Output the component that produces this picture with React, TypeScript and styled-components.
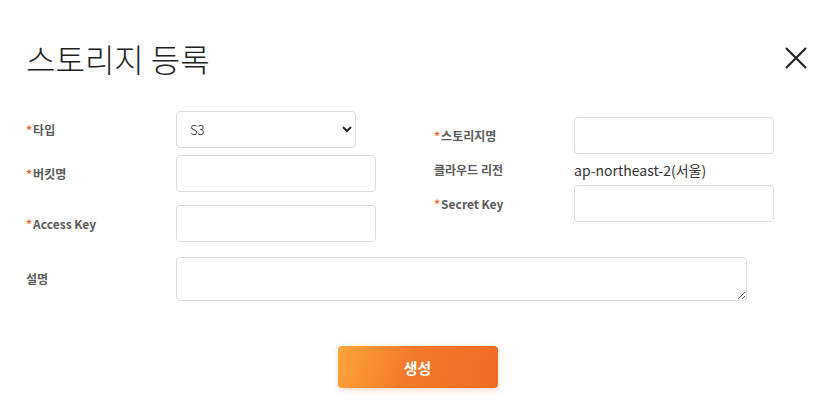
import React from "react";
import styled, { createGlobalStyle } from "styled-components";

const GlobalStyle = createGlobalStyle`
  html, body { margin: 0; padding: 0; background: #fff; }
  body { font-family: "Noto Sans CJK KR", "Noto Sans", sans-serif; color: #222; }
  * { box-sizing: border-box; }
`;

const Modal = styled.div`
  width: 835px;
  padding: 40px 26px 26px 26px;
  display: flex;
  flex-direction: column;
`;

const Header = styled.div`
  display: flex;
  justify-content: space-between;
  align-items: center;
  height: 36px;
`;

const Title = styled.h1`
  margin: 0;
  font-size: 32px;
  line-height: 36px;
  font-weight: 300;
  color: #222;
  letter-spacing: 0;
`;

const CloseButton = styled.button`
  width: 24px;
  height: 24px;
  padding: 0;
  margin-right: 1px;
  border: none;
  background: none;
  display: flex;
  align-items: center;
  justify-content: center;
  cursor: pointer;
`;

const Columns = styled.div`
  display: grid;
  grid-template-columns: 408px 1fr;
  margin-top: 35px;
`;

const Column = styled.div<{ $offset?: number }>`
  display: flex;
  flex-direction: column;
  padding-top: ${(p) => p.$offset ?? 0}px;
`;

const Row = styled.div<{ $labelWidth: number; $mt?: number }>`
  display: grid;
  grid-template-columns: ${(p) => p.$labelWidth}px auto;
  align-items: center;
  margin-top: ${(p) => p.$mt ?? 0}px;
`;

const Label = styled.label`
  font-size: 12px;
  font-weight: 700;
  color: #5a5a5a;
  line-height: 18px;
  white-space: nowrap;
`;

const Req = styled.span`
  color: #f26b22;
  font-size: 12px;
  margin-right: 1px;
`;

const Input = styled.input<{ $w: number }>`
  width: ${(p) => p.$w}px;
  height: 37px;
  border: 1px solid #dcdcdc;
  border-radius: 4px;
  padding: 0 12px;
  font-family: inherit;
  font-size: 13px;
  outline: none;
  background: #fff;
`;

const Select = styled.select`
  width: 180px;
  height: 37px;
  border: 1px solid #dcdcdc;
  border-radius: 4px;
  padding: 0 9px;
  font-family: "Noto Sans CJK KR", sans-serif;
  font-size: 13px;
  font-weight: 300;
  color: #222;
  background: #fff;
  outline: none;
`;

const Value = styled.span`
  font-size: 14px;
  color: #333;
  line-height: 20px;
`;

const TextArea = styled.textarea`
  width: 571px;
  height: 44px;
  border: 1px solid #dcdcdc;
  border-radius: 4px;
  padding: 8px 12px;
  font-family: inherit;
  font-size: 13px;
  outline: none;
  display: block;
`;

const Footer = styled.div`
  display: flex;
  justify-content: center;
  margin-top: 45px;
`;

const PrimaryButton = styled.button`
  width: 160px;
  height: 42px;
  border: none;
  border-radius: 4px;
  background: linear-gradient(110deg, #ffa63b 0%, #f4782a 45%, #f26b22 100%);
  color: #fff;
  font-family: "Noto Sans CJK KR", sans-serif;
  font-size: 15px;
  font-weight: 700;
  box-shadow: 0 2px 6px rgba(242, 107, 34, 0.25);
  cursor: pointer;
`;

const Required = ({ children }: { children: React.ReactNode }) => (
  <Label>
    <Req>*</Req>
    {children}
  </Label>
);

export default function App() {
  return (
    <>
      <GlobalStyle />
      <Modal>
        <Header>
          <Title>스토리지 등록</Title>
          <CloseButton aria-label="닫기">
            <svg width="22" height="22" viewBox="0 0 22 22">
              <path d="M1 1 L21 21 M21 1 L1 21" stroke="#222" strokeWidth="2.2" />
            </svg>
          </CloseButton>
        </Header>
        <Columns>
          <Column>
            <Row $labelWidth={150}>
              <Required>타입</Required>
              <Select defaultValue="S3">
                <option value="S3">S3</option>
              </Select>
            </Row>
            <Row $labelWidth={150} $mt={7}>
              <Required>버킷명</Required>
              <Input $w={200} />
            </Row>
            <Row $labelWidth={150} $mt={13}>
              <Required>Access Key</Required>
              <Input $w={200} />
            </Row>
          </Column>
          <Column $offset={6}>
            <Row $labelWidth={140}>
              <Required>스토리지명</Required>
              <Input $w={200} />
            </Row>
            <Row $labelWidth={140} $mt={6}>
              <Label>클라우드 리전</Label>
              <Value>ap-northeast-2(서울)</Value>
            </Row>
            <Row $labelWidth={140} $mt={5}>
              <Required>Secret Key</Required>
              <Input $w={200} />
            </Row>
          </Column>
        </Columns>
        <Row $labelWidth={150} $mt={15}>
          <Label>설명</Label>
          <TextArea />
        </Row>
        <Footer>
          <PrimaryButton>생성</PrimaryButton>
        </Footer>
      </Modal>
    </>
  );
}
